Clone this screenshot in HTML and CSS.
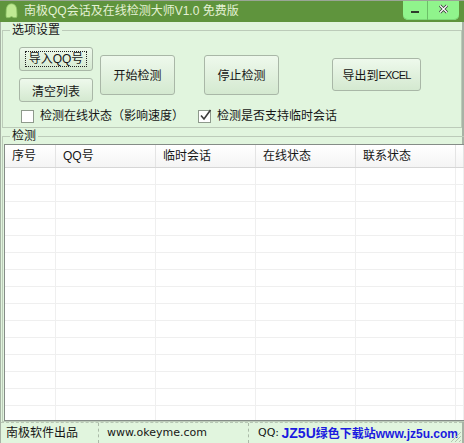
FILE: index.html
```html
<!DOCTYPE html>
<html lang="zh-CN">
<head>
    <meta charset="UTF-8">
    <meta name="viewport" content="width=device-width, initial-scale=1.0">
    <title>南极QQ会话及在线检测大师V1.0 免费版</title>
    <link rel="stylesheet" href="styles.css">
</head>
<body>
    <div class="titleBar">
        <svg class="appIcon" width="13" height="16" viewBox="0 0 13 16">
            <path d="M6.5 0.8 C2.8 0.8 1.2 4 1.2 8 C1.2 11 0.6 13.2 1.6 14.6 L4.2 14.6 L6.5 13.6 L8.8 14.6 L11.4 14.6 C12.4 13.2 11.8 11 11.8 8 C11.8 4 10.2 0.8 6.5 0.8 Z" fill="#bfe993" stroke="#8fc468" stroke-width="0.8"/>
        </svg>
        <span class="title">南极QQ会话及在线检测大师V1.0 免费版</span>
        <div class="ctrls">
            <div class="ctrl minBtn">
                <svg width="10" height="4" viewBox="0 0 10 4"><rect x="1" y="1" width="8" height="2" fill="#2e3b2b"/></svg>
            </div>
            <div class="ctrl closeBtn">
                <svg width="11" height="10" viewBox="0 0 11 10">
                    <path d="M2 1.5 L9 8.5 M9 1.5 L2 8.5" stroke="#3a3a3a" stroke-width="3"/>
                    <path d="M2 1.5 L9 8.5 M9 1.5 L2 8.5" stroke="#ffffff" stroke-width="1.3"/>
                </svg>
            </div>
        </div>
    </div>

    <div class="frame">
        <fieldset class="group optGroup">
            <legend>选项设置</legend>
            <div class="btnRow">
                <div class="btnCol">
                    <button class="btn small"><span class="focusRect">导入QQ号</span></button>
                    <button class="btn small">清空列表</button>
                </div>
                <button class="btn big">开始检测</button>
                <button class="btn big stop">停止检测</button>
                <button class="btn excel">导出到<span class="narrow">EXCEL</span></button>
            </div>
            <div class="checkRow">
                <label class="chk first"><span class="box"></span>检测在线状态（影响速度）</label>
                <label class="chk"><span class="box">
                    <svg width="15" height="15" viewBox="0 0 15 15"><path d="M3 7.5 L6 11 L12.5 2" fill="none" stroke="#3c3c3c" stroke-width="1.6"/></svg>
                </span>检测是否支持临时会话</label>
            </div>
        </fieldset>

        <fieldset class="group listGroup">
            <legend>检测</legend>
            <div class="listView">
                <div class="lvRow lvHead">
                    <div>序号</div><div>QQ号</div><div>临时会话</div><div>在线状态</div><div>联系状态</div><div></div>
                </div>
                <div class="lvBody"></div>
            </div>
        </fieldset>

        <div class="statusBar">
            <div class="cell c1">南极软件出品</div>
            <div class="cell c2">www.okeyme.com</div>
            <div class="cell c3">QQ:</div>
            <div class="watermark"><span class="wmBig">JZ5U</span>绿色下载站www.jz5u.com</div>
            <svg class="grip" width="14" height="14" viewBox="0 0 14 14">
                <path d="M13 3 L3 13 M13 7 L7 13 M13 11 L11 13" stroke="#b5c2b2" stroke-width="1"/>
            </svg>
        </div>
    </div>

    <script>
        let lvBody = document.querySelector('.lvBody');
        for(let i = 0; i < 16; i++){
            let row = document.createElement('div');
            row.setAttribute('class', 'lvRow');
            row.innerHTML = '<div></div><div></div><div></div><div></div><div></div><div></div>';
            lvBody.appendChild(row);
        }
    </script>
</body>
</html>
```

FILE: styles.css
```css
* {
    margin: 0;
    padding: 0;
    box-sizing: border-box;
}

body {
    width: 464px;
    height: 443px;
    overflow: hidden;
    font-family: "Liberation Sans", "Noto Sans CJK SC", sans-serif;
    font-size: 12px;
    color: #161616;
    background: #e1f5de;
    display: flex;
    flex-direction: column;
}

/* title bar */
.titleBar {
    height: 22px;
    flex: none;
    background: #5f943d;
    border-top: 1px solid #9aa596;
    display: flex;
    align-items: flex-start;
    padding-left: 5px;
}

.appIcon {
    margin-top: 2px;
}

.title {
    margin-left: 6px;
    line-height: 20px;
    color: #e4f1d4;
    font-size: 12px;
    white-space: nowrap;
}

.ctrls {
    margin-left: auto;
    margin-right: 5px;
    display: flex;
    height: 19px;
}

.ctrl {
    height: 19px;
    background: #90f48c;
    display: flex;
    align-items: center;
    justify-content: center;
    box-shadow: inset 0 -1px 0 #7bd877;
}

.minBtn {
    width: 25px;
    border-radius: 0 0 0 5px;
    border-right: 1px solid #6cbf68;
    padding-top: 3px;
}

.closeBtn {
    width: 31px;
    border-radius: 0 0 5px 0;
    padding-bottom: 4px;
}

/* window body */
.frame {
    flex: 1;
    display: flex;
    flex-direction: column;
    border-left: 1px solid #a7b3a5;
    border-right: 2px solid #a7b3a5;
}

.group {
    border: 1px solid #bccbb9;
    margin-left: 1px;
    padding: 0 0 0 1px;
}

.group legend {
    margin-left: 6px;
    padding: 0 2px;
    line-height: 16px;
    font-size: 12px;
}

.btnRow {
    display: flex;
    align-items: center;
    padding: 9px 0 0 15px;
}

.btnCol {
    display: flex;
    flex-direction: column;
    gap: 7px;
    width: 74px;
}

.btn {
    font-family: "Liberation Sans", "Noto Sans CJK SC", sans-serif;
    font-size: 12px;
    color: #161616;
    border: 1px solid #a9b7a7;
    border-radius: 3px;
    background: linear-gradient(#eef9ec, #d4e9d0);
    display: flex;
    align-items: center;
    justify-content: center;
}

.small {
    width: 74px;
    height: 24px;
}

.focusRect {
    border: 1px dotted #222;
    padding: 0 3px;
    line-height: 14px;
}

.big {
    width: 75px;
    height: 40px;
    margin-left: 7px;
}

.stop {
    margin-left: 29px;
}

.excel {
    width: 89px;
    height: 33px;
    margin-left: 53px;
}

.narrow {
    font-size: 11px;
    letter-spacing: -0.8px;
}

.checkRow {
    display: flex;
    margin-top: 6px;
    padding: 0 0 3px 17px;
    line-height: 16px;
}

.chk {
    display: flex;
    align-items: center;
    white-space: nowrap;
}

.chk.first {
    width: 177px;
    flex: none;
}

.box {
    width: 13px;
    height: 13px;
    border: 1px solid #8e9a8c;
    background: #fff;
    margin-right: 6px;
    position: relative;
}

.box svg {
    position: absolute;
    left: -1px;
    top: -3px;
}

/* list */
.listGroup legend {
    margin-left: 6px;
}

.listView {
    height: 277px;
    border: 1px solid #858c87;
    background: #fff;
    overflow: hidden;
}

.lvRow {
    display: grid;
    grid-template-columns: 51px 100px 100px 100px 100px 1fr;
    height: 17px;
    border-bottom: 1px solid #efefef;
}

.lvRow > div {
    border-right: 1px solid #efefef;
}

.lvHead {
    height: 23px;
    background: linear-gradient(#ffffff, #f4f4f4);
    border-bottom: 1px solid #d6d6d6;
}

.lvHead > div {
    border-right: 1px solid #e4e4e4;
    padding-left: 7px;
    line-height: 22px;
}

/* status bar */
.statusBar {
    flex: 1;
    display: flex;
    border-top: 1px dashed #b7c6b4;
    position: relative;
    line-height: 20px;
}

.cell {
    border-right: 1px dashed #abbaa8;
    white-space: nowrap;
}

.c1 {
    width: 98px;
    padding-left: 5px;
}

.c2 {
    width: 150px;
    padding-left: 8px;
    font-family: "DejaVu Sans", sans-serif;
    font-size: 11px;
}

.c3 {
    border-right: none;
    padding-left: 9px;
    font-family: "DejaVu Sans", sans-serif;
    font-size: 11px;
}

.watermark {
    position: absolute;
    right: 4px;
    top: 0;
    color: #1b1be0;
    font-weight: bold;
    font-size: 12px;
    white-space: nowrap;
}

.wmBig {
    font-size: 14px;
}

.grip {
    position: absolute;
    right: 0;
    bottom: 0;
}
```
